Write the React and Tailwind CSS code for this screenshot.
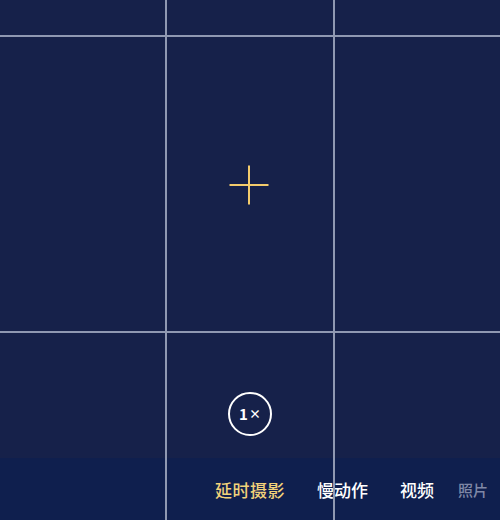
import React from "react";

const modes = [
  { label: "延时摄影", active: true },
  { label: "慢动作" },
  { label: "视频" },
  { label: "照片", dim: true },
];

const font = { fontFamily: '"Noto Sans CJK SC", "Liberation Sans", sans-serif' };

export default function App() {
  return (
    <div
      className="relative w-[500px] h-[520px] overflow-hidden bg-[#16214a] flex flex-col"
      style={font}
    >
      {/* viewfinder */}
      <div className="flex-1 flex flex-col items-center">
        <div className="h-[165px]" />
        <svg width="40" height="40" viewBox="0 0 40 40" className="ml-[-2px]">
          <path d="M20 0.5v39M0.5 20h39" stroke="#f3cb6c" strokeWidth="2" />
        </svg>
        <div className="flex-1" />
        <button className="mb-[22px] w-[44px] h-[44px] rounded-full border-2 border-white flex items-center justify-center text-white font-bold">
          <span className="text-[15px]">1</span>
          <span className="text-[12px] ml-[1px]">×</span>
        </button>
      </div>

      {/* mode bar */}
      <div className="h-[62px] bg-[#0f1f4e] flex items-center pl-[215px] gap-[32px] pt-[2px]">
        {modes.map((m) => (
          <span
            key={m.label}
            className={
              m.active
                ? "text-[17px] font-medium text-[#f2d27a] tracking-[0.5px]"
                : m.dim
                ? "text-[15px] font-medium text-[#7f88a6] ml-[-8px]"
                : "text-[17px] font-medium text-white"
            }
          >
            {m.label}
          </span>
        ))}
      </div>

      {/* grid overlay */}
      <div className="pointer-events-none absolute inset-0">
        <div className="absolute left-0 right-0 top-[35px] h-[1.5px] bg-[#8f98b2]" />
        <div className="absolute left-0 right-0 top-[331px] h-[1.5px] bg-[#8f98b2]" />
        <div className="absolute top-0 bottom-0 left-[165px] w-[1.5px] bg-[#8f98b2]" />
        <div className="absolute top-0 bottom-0 left-[333px] w-[1.5px] bg-[#8f98b2]" />
      </div>
    </div>
  );
}
